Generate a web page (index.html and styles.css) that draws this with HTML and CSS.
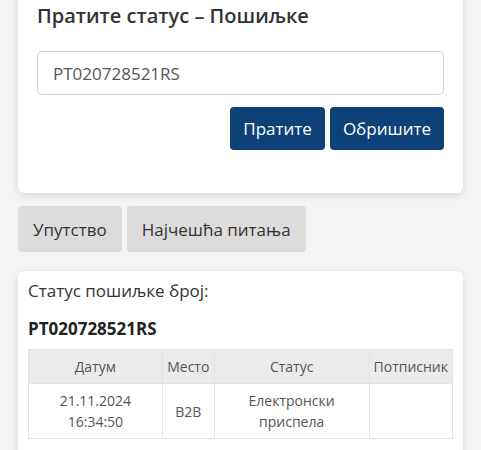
FILE: index.html
```html
<!DOCTYPE html>
<html lang="sr">
<head>
<meta charset="utf-8">
<title>Пратите статус – Пошиљке</title>
<link rel="stylesheet" href="styles.css">
</head>
<body>
<div class="page">
  <section class="card search-card">
    <h1 class="title">Пратите статус – Пошиљке</h1>
    <input class="track-input" type="text" value="PT020728521RS">
    <div class="actions">
      <button class="btn btn-primary">Пратите</button>
      <button class="btn btn-primary">Обришите</button>
    </div>
  </section>

  <nav class="tabs">
    <button class="btn btn-grey">Упутство</button>
    <button class="btn btn-grey">Најчешћа питања</button>
  </nav>

  <section class="card result-card">
    <p class="result-label">Статус пошиљке број:</p>
    <p class="result-number">PT020728521RS</p>
    <table class="status-table">
      <colgroup>
        <col class="c-date"><col class="c-place"><col class="c-status"><col class="c-sign">
      </colgroup>
      <thead>
        <tr><th>Датум</th><th>Место</th><th>Статус</th><th>Потписник</th></tr>
      </thead>
      <tbody>
        <tr><td>21.11.2024<br>16:34:50</td><td>B2B</td><td>Електронски<br>приспела</td><td></td></tr>
      </tbody>
    </table>
  </section>
</div>
</body>
</html>
```

FILE: styles.css
```css
* { box-sizing: border-box; }

html, body {
  margin: 0;
  background: #f4f4f4;
  font-family: "Open Sans", "Noto Sans", sans-serif;
  color: #333;
}

.page {
  padding: 0 18px;
  margin-top: -10px;
}

.card {
  background: #fff;
  border-radius: 6px;
  box-shadow: 0 2px 8px rgba(0, 0, 0, 0.12);
}

.search-card {
  padding: 14px 19px 43px;
}

.title {
  margin: 0;
  font-size: 20px;
  font-weight: 600;
  line-height: 24px;
  color: #333;
}

.track-input {
  display: block;
  width: 100%;
  height: 44px;
  margin-top: 23px;
  padding: 0 15px;
  border: 1px solid #d2d2d2;
  border-radius: 5px;
  font-family: inherit;
  font-size: 17px;
  color: #555;
  background: #fff;
}

.actions {
  display: flex;
  justify-content: flex-end;
  gap: 5px;
  margin-top: 12px;
}

.btn {
  font-family: inherit;
  font-size: 17px;
  border: none;
  border-radius: 4px;
  cursor: pointer;
}

.btn-primary {
  height: 43px;
  padding: 0 13px;
  background: #0d4177;
  color: #fff;
}

.tabs {
  display: flex;
  gap: 5px;
  margin-top: 13px;
}

.btn-grey {
  height: 46px;
  padding: 0 15px;
  background: #dcdcdc;
  color: #333;
}

.result-card {
  margin-top: 19px;
  padding: 10px 10px 20px;
}

.result-label {
  margin: 0;
  font-size: 17px;
  line-height: 20px;
  color: #333;
}

.result-number {
  margin: 18px 0 0;
  font-size: 17px;
  font-weight: 700;
  line-height: 20px;
  color: #222;
}

.status-table {
  width: 100%;
  margin-top: 10px;
  border-collapse: collapse;
  font-size: 14px;
  line-height: 21px;
  color: #555;
  text-align: center;
}

.c-date { width: 134px; }
.c-place { width: 52px; }
.c-status { width: 155px; }

.status-table th,
.status-table td {
  border: 1px solid #e2e2e2;
  padding: 6px 4px;
  font-weight: 400;
  vertical-align: middle;
}

.status-table th {
  background: #ebebeb;
}
```
